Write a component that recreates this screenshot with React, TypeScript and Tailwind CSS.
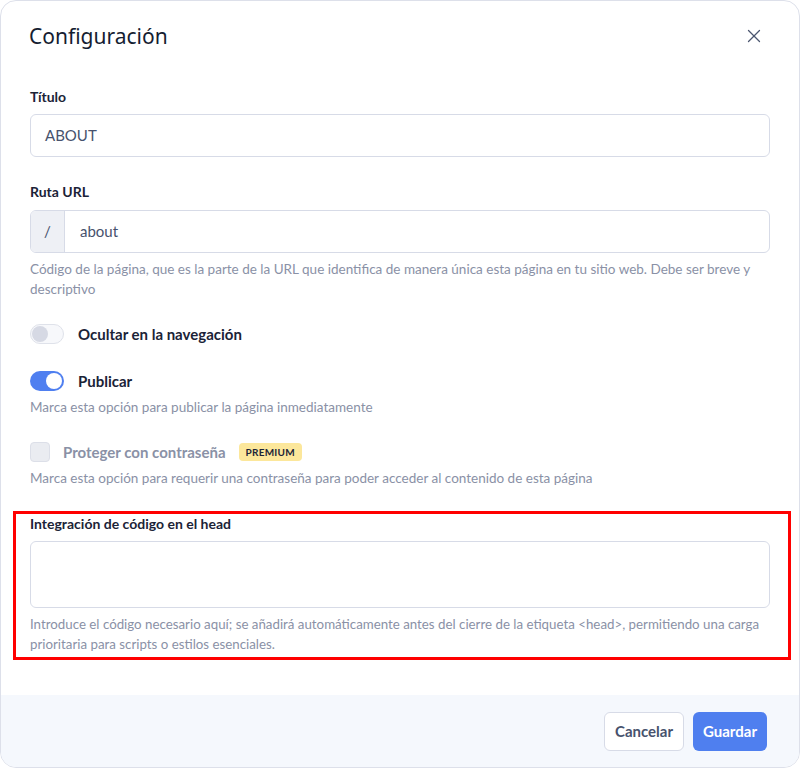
import { X } from "lucide-react";

const body = { fontFamily: "Lato, 'Noto Sans', sans-serif" };

const Help = ({ children, small }: { children: React.ReactNode; small?: boolean }) => (
  <p
    className={
      small
        ? "mt-[6px] whitespace-nowrap text-[13.3px] leading-[20px] text-[#8a91a6]"
        : "mt-[6px] text-[13.5px] leading-[20px] text-[#8a91a6]"
    }
  >
    {children}
  </p>
);

const Label = ({ children }: { children: React.ReactNode }) => (
  <label className="block text-[14px] font-bold leading-[20px] text-[#1b2337]">{children}</label>
);

const Toggle = ({ on }: { on: boolean }) => (
  <span
    className={
      on
        ? "flex h-[20px] w-[34px] items-center justify-end rounded-full bg-[#4f7ff0] px-[2px]"
        : "flex h-[20px] w-[34px] items-center rounded-full border border-[#dfe2ea] bg-[#f7f8fb] px-[1px]"
    }
  >
    <span className={on ? "h-[16px] w-[16px] rounded-full bg-white" : "h-[16px] w-[16px] rounded-full bg-[#d6d9e4]"} />
  </span>
);

export default function App() {
  return (
    <div style={body} className="flex h-[768px] w-[800px] flex-col overflow-hidden rounded-2xl border border-[#dde0ea] bg-white">
      <div className="flex items-center justify-between pl-[28px] pr-[34px] pt-[20px]">
        <h2 style={{ fontFamily: "'Noto Sans', sans-serif" }} className="text-[21px] leading-[30px] text-[#151d31]">
          Configuración
        </h2>
        <X className="h-[22px] w-[22px] text-[#4b566f]" strokeWidth={1.4} />
      </div>

      <div className="px-[29px] pt-[36px]">
        <Label>Título</Label>
        <div className="mt-[7px] flex h-[43px] items-center rounded-md border border-[#d7dbe7] px-[14px] text-[15px] text-[#47526d]">
          ABOUT
        </div>

        <div className="mt-[25px]">
          <Label>Ruta URL</Label>
        </div>
        <div className="mt-[8px] flex h-[43px] overflow-hidden rounded-md border border-[#d7dbe7] text-[15px] text-[#47526d]">
          <span className="flex w-[34px] items-center justify-center border-r border-[#d7dbe7] bg-[#eef0f5]">/</span>
          <span className="flex items-center pl-[15px]">about</span>
        </div>
        <Help>
          Código de la página, que es la parte de la URL que identifica de manera única esta página en tu sitio web. Debe ser breve y
          <br />
          descriptivo
        </Help>

        <div className="mt-[25px] flex items-center gap-[14px]">
          <Toggle on={false} />
          <span className="text-[15px] font-bold leading-[20px] text-[#1b2337]">Ocultar en la navegación</span>
        </div>

        <div className="mt-[27px] flex items-center gap-[14px]">
          <Toggle on />
          <span className="text-[15px] font-bold leading-[20px] text-[#1b2337]">Publicar</span>
        </div>
        <Help>Marca esta opción para publicar la página inmediatamente</Help>

        <div className="mt-[25px] flex h-[20px] items-center">
          <span className="h-[20px] w-[20px] rounded-[4px] border border-[#dcdfe8] bg-[#eaecf1]" />
          <span className="ml-[13px] text-[15px] font-bold leading-[20px] text-[#8a91a6]">Proteger con contraseña</span>
          <span className="ml-[13px] rounded-[4px] bg-[#fce79b] px-[7px] py-[3px] text-[10px] font-bold leading-[12px] tracking-wide text-[#1b2337]">
            PREMIUM
          </span>
        </div>
        <Help>Marca esta opción para requerir una contraseña para poder acceder al contenido de esta página</Help>

        <div className="relative mt-[26px]">
          <div className="pointer-events-none absolute -bottom-[6px] -left-[17px] -right-[21px] -top-[3px] border-[3px] border-[#ff0000]" />
          <Label>Integración de código en el head</Label>
          <div className="mt-[7px] h-[67px] rounded-md border border-[#d7dbe7]" />
          <Help small>
            Introduce el código necesario aquí; se añadirá automáticamente antes del cierre de la etiqueta &lt;head&gt;, permitiendo una carga
            <br />
            prioritaria para scripts o estilos esenciales.
          </Help>
        </div>
      </div>

      <div className="mt-auto flex h-[72px] items-center justify-end gap-[9px] bg-[#f5f8fd] pr-[32px]">
        <button className="h-[39px] rounded-md border border-[#d7dbe7] bg-white px-[10px] text-[15px] font-bold text-[#47526d]">
          Cancelar
        </button>
        <button className="h-[39px] rounded-md bg-[#4f7fef] px-[10px] text-[15px] font-bold text-white">Guardar</button>
      </div>
    </div>
  );
}
